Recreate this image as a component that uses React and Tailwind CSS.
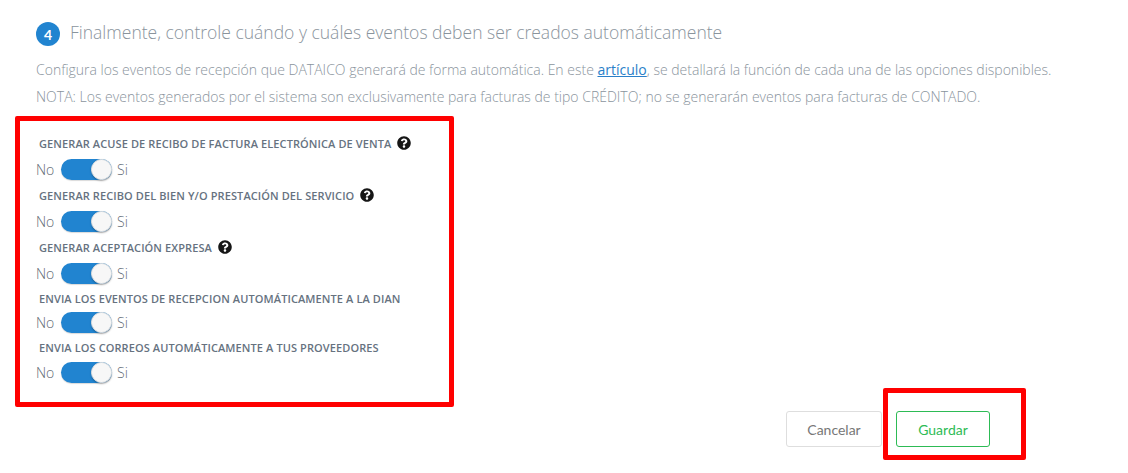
const OPTIONS = [
  { label: "Generar acuse de recibo de factura electrónica de venta", help: true, row: "pt-[14px]", gap: "mt-[8px]" },
  { label: "Generar recibo del bien y/o prestación del servicio", help: true, row: "pt-[7px]", gap: "mt-[8px]" },
  { label: "Generar aceptación expresa", help: true, row: "pt-[7px]", gap: "mt-[8px]" },
  { label: "Envia los eventos de recepcion automáticamente a la DIAN", help: false, row: "pt-[6px]", gap: "mt-[6px]" },
  { label: "Envia los correos automáticamente a tus proveedores", help: false, row: "pt-[6px]", gap: "mt-[7px]" },
];

function HelpIcon() {
  return (
    <svg viewBox="0 0 512 512" className="ml-[6px] h-[14px] w-[14px] shrink-0 fill-[#161616]">
      <path d="M504 256c0 137-111 248-248 248S8 393 8 256 119 8 256 8s248 111 248 248zM262.700 90c-54.500 0-89.300 23-116.500 63.800-3.500 5.300-2.400 12.400 2.700 16.300l34.700 26.300c5.200 3.900 12.600 3 16.700-2.100 17.900-22.700 30.100-35.800 57.300-35.800 20.400 0 45.700 13.100 45.700 32.900 0 15-12.400 22.700-32.600 34-23.600 13.200-54.800 29.700-54.800 70.900V300c0 6.600 5.400 12 12 12h56c6.600 0 12-5.400 12-12v-1.300c0-28.600 83.500-29.800 83.500-107.200 0-58.300-60.500-102.500-116.900-102.500zM256 339c-25.500 0-46.200 20.700-46.200 46.200 0 25.500 20.700 46.200 46.200 46.200s46.200-20.700 46.200-46.200c0-25.500-20.700-46.200-46.200-46.200z" />
    </svg>
  );
}

function Toggle() {
  return (
    <div className="flex h-[21px] items-center text-[14px] font-light leading-none text-[#5f6b75]">
      <span className="w-[25px]">No</span>
      <span className="flex h-[21px] w-[51px] justify-end rounded-full bg-[#2184d0] shadow-[0_1px_1px_rgba(0,0,0,0.15)]">
        <span className="h-[21px] w-[21px] rounded-full border border-[#e2e2e2] bg-[#f7f7f7] shadow-[0_1px_2px_rgba(0,0,0,0.25)]" />
      </span>
      <span className="ml-[5px]">Si</span>
    </div>
  );
}

export default function App() {
  return (
    <div className="h-[473px] w-[1128px] overflow-hidden bg-white font-['Open_Sans',sans-serif]">
      {/* Step heading */}
      <div className="flex items-center pl-[36px] pt-[22px]">
        <span className="flex h-[24px] w-[24px] items-center justify-center rounded-full bg-[#2184d0] font-['Lato',sans-serif] text-[14px] font-bold text-white">
          4
        </span>
        <h2 className="ml-[10px] -translate-y-[2px] text-[17.5px] font-light leading-[23px] text-[#8a949d]">
          Finalmente, controle cuándo y cuáles eventos deben ser creados automáticamente
        </h2>
      </div>

      <div className="mt-[11px] pl-[36px] text-[14px] font-light leading-[26px] text-[#8a949d]">
        <p>
          Configura los eventos de recepción que DATAICO generará de forma automática. En este{" "}
          <a href="#" className="font-normal text-[#2a7fc9] underline">
            artículo
          </a>
          , se detallará la función de cada una de las opciones disponibles.
        </p>
        <p className="mt-[1px]">NOTA: Los eventos generados por el sistema son exclusivamente para facturas de tipo CRÉDITO; no se generarán eventos para facturas de CONTADO.</p>
      </div>

      {/* Options */}
      <div className="ml-[15px] mt-[6px] h-[291px] w-[439px] rounded-[2px] border-[5px] border-[#ff0000] pl-[16px]">
        {OPTIONS.map((opt) => (
          <div key={opt.label} className={opt.row}>
            <div className="ml-[3px] flex h-[16px] items-center text-[11px] font-semibold uppercase leading-none tracking-[0.1px] text-[#66727f]">
              {opt.label}
              {opt.help && <HelpIcon />}
            </div>
            <div className={opt.gap}>
              <Toggle />
            </div>
          </div>
        ))}
      </div>

      {/* Actions */}
      <div className="-mt-[19px] flex items-start justify-end pr-[102px] font-['Lato',sans-serif] text-[14px]">
        <button className="mt-[23px] h-[36px] w-[96px] rounded-[3px] border border-[#dedede] bg-white text-[#777777]">
          Cancelar
        </button>
        <div className="ml-[1px] h-[72px] w-[143px] rounded-[2px] border-[5px] border-[#ff0000] pl-[8px] pt-[18px]">
          <button className="h-[36px] w-[94px] rounded-[3px] border border-[#2dbb55] bg-white text-[#2dbb55]">
            Guardar
          </button>
        </div>
      </div>
    </div>
  );
}
